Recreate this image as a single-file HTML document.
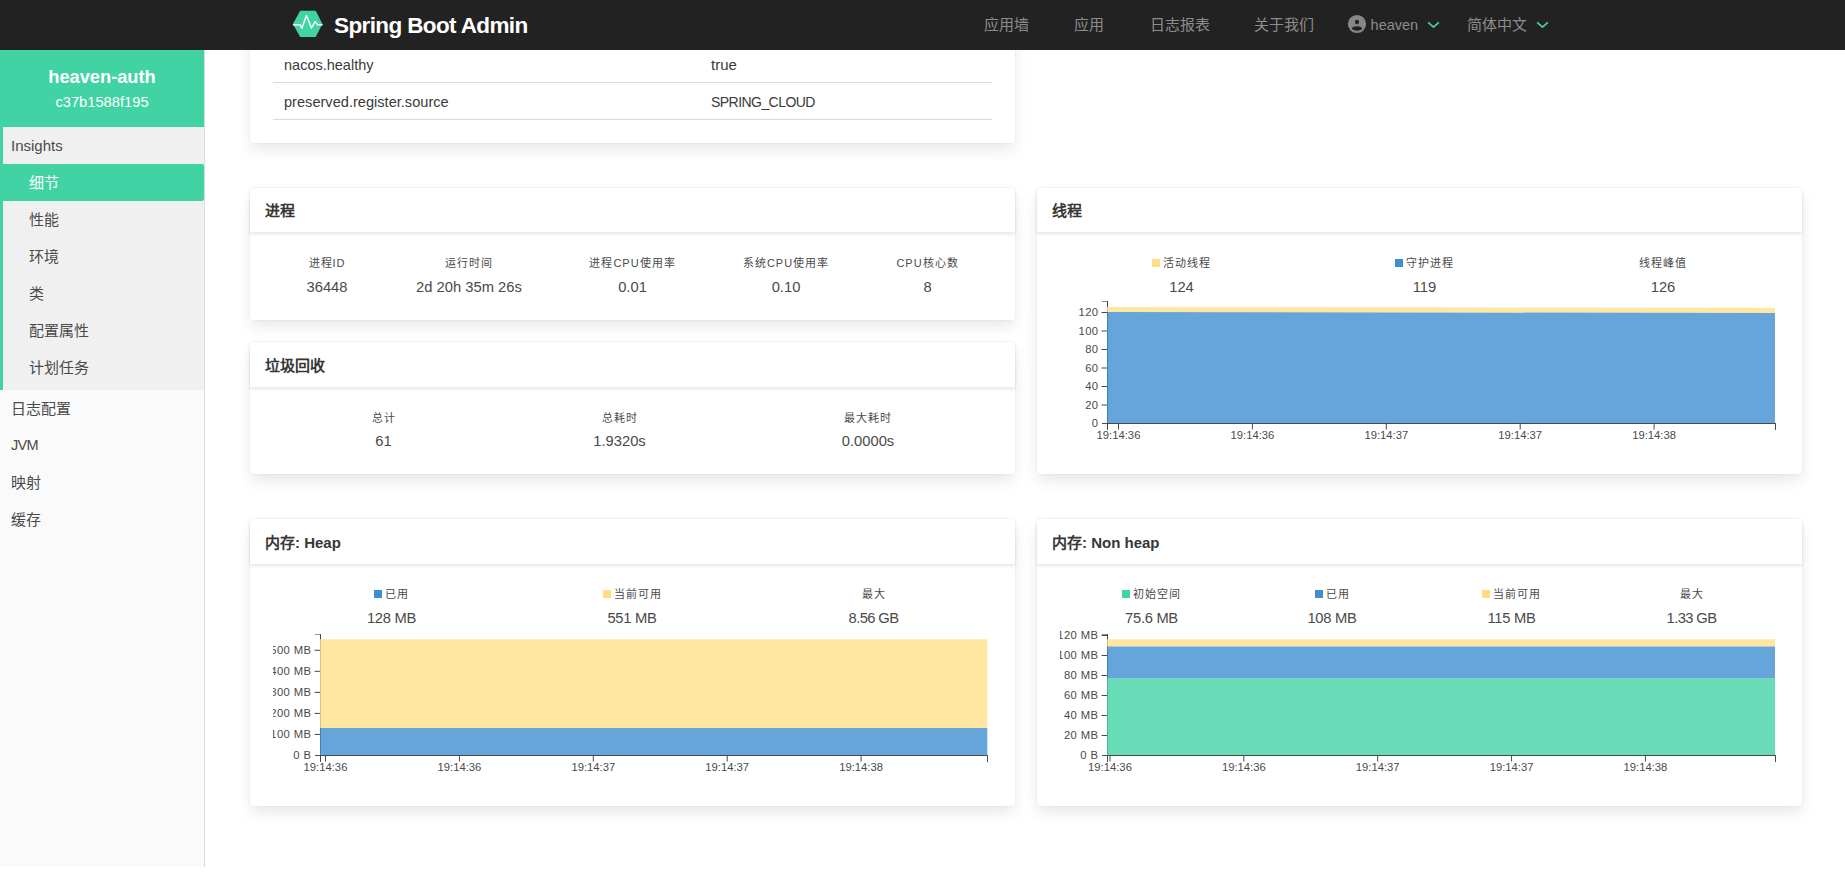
<!DOCTYPE html>
<html lang="zh-CN">
<head>
<meta charset="utf-8">
<title>Spring Boot Admin</title>
<style>
*{box-sizing:border-box}
html,body{margin:0;padding:0}
body{width:1845px;height:884px;overflow:hidden;background:#fff;position:relative;
  font-family:"Liberation Sans",sans-serif;font-size:14.5px;color:#4a4a4a;line-height:1.5}
.abs{position:absolute}
/* ---------- navbar ---------- */
#nav{position:absolute;left:0;top:0;width:1845px;height:50px;background:#222;z-index:10}
#nav .brand{position:absolute;left:334px;top:0;height:50px;line-height:50px;color:#fff;
  font-weight:bold;font-size:22.5px;letter-spacing:-0.62px;white-space:nowrap;padding-top:1px}
#nav .item{position:absolute;top:0;height:50px;line-height:49px;color:#8c8c8c;font-size:15px;white-space:nowrap}
/* ---------- sidebar ---------- */
#side{position:absolute;left:0;top:50px;width:205px;height:817px;background:#fafafa;border-right:1px solid #dbdbdb}
#side .head{position:absolute;left:0;top:0;width:204px;height:77px;background:#42d3a5;color:#fff;text-align:center}
#side .head .n{position:absolute;left:0;width:204px;top:12.5px;font-size:18.25px;font-weight:bold;line-height:28px}
#side .head .i{position:absolute;left:0;width:204px;top:41px;font-size:14.7px;line-height:22px}
#side .grp{position:absolute;left:0;top:77px;width:204px;height:263px;background:#f0f0f0;border-left:3px solid #42d3a5;border-radius:0 2px 0 0}
#side .it{position:absolute;left:0;width:204px;height:37px;line-height:37px;font-size:15px;color:#4a4a4a;white-space:nowrap}
#side .it.top{padding-left:11px}
#side .it.sub{padding-left:29px}
#side .it.act{background:#42d3a5;color:#fff;border-radius:0 2px 2px 0}
/* ---------- cards ---------- */
.card{position:absolute;background:#fff;border-radius:4px;
  box-shadow:0 7.5px 15px -1.875px rgba(10,10,10,.1),0 0 0 1px rgba(10,10,10,.02)}
.card .hd{position:absolute;left:0;top:0;width:100%;height:44px;border-radius:4px 4px 0 0;
  box-shadow:0 1.875px 3.75px rgba(10,10,10,.1)}
.card .hd b{position:absolute;left:15px;top:0;line-height:45px;font-size:15px;font-weight:bold;color:#363636;white-space:nowrap}
.lv{position:absolute;text-align:center;white-space:nowrap;width:200px;margin-left:-100px}
.lv .h{display:block;font-size:11px;letter-spacing:1px;line-height:16px;height:16px;color:#4a4a4a}
.lv .v{display:block;font-size:14.75px;line-height:22px;height:22px;margin-top:4.2px;color:#4a4a4a}
.lv .h i{display:inline-block;width:8px;height:8px;margin-right:3px;vertical-align:0.5px}
.by{background:#ffdd82}.bb{background:#3e8ed0}.bg{background:#42d3a5}
svg{position:absolute;overflow:hidden}
svg text{font-family:"Liberation Sans",sans-serif;font-size:11.25px;fill:#4a4a4a}
.tk{fill:none;stroke:#4a4a4a;stroke-width:1}
.ax{fill:none;stroke:#4a4a4a;stroke-width:1;shape-rendering:crispEdges}
</style>
</head>
<body>

<!-- ================= NAVBAR ================= -->
<div id="nav">
  <svg style="left:292px;top:10px" width="32" height="28" viewBox="0 0 32 28">
    <path d="M8.8 1.8 H23.1 L29.3 13.9 L23.1 26 H8.8 L2 13.9Z" fill="#42d3a5" stroke="#42d3a5" stroke-width="2" stroke-linejoin="round"/>
    <path d="M0.9 14.7 H8 L9.85 18.2 L14.5 5.6 L19.4 18 L23.2 11.7 L25.7 14.7 H30.6" fill="none" stroke="#fff" stroke-width="1.4" stroke-linejoin="round"/>
  </svg>
  <div class="brand">Spring Boot Admin</div>
  <div class="item" style="left:984px">应用墙</div>
  <div class="item" style="left:1074px">应用</div>
  <div class="item" style="left:1150px">日志报表</div>
  <div class="item" style="left:1254px">关于我们</div>
  <svg style="left:1347px;top:14px" width="20" height="20" viewBox="0 0 20 20">
    <circle cx="10" cy="10" r="9.1" fill="#878787"/>
    <circle cx="10" cy="8" r="2.15" fill="#222"/>
    <path d="M4.9 15 Q4.9 12.3 10 12.3 Q15.1 12.3 15.1 15 Q13 16.7 10 16.7 Q7 16.7 4.9 15Z" fill="#222"/>
  </svg>
  <div class="item" style="left:1370.6px;font-size:14.5px;padding-top:0.6px">heaven</div>
  <svg style="left:1426px;top:19px" width="15" height="12" viewBox="0 0 15 12"><path d="M2.2 3.3 L7.5 8.1 L12.8 3.3" fill="none" stroke="#42d3a5" stroke-width="1.7"/></svg>
  <div class="item" style="left:1467px">简体中文</div>
  <svg style="left:1535px;top:19px" width="15" height="12" viewBox="0 0 15 12"><path d="M2.2 3.3 L7.5 8.1 L12.8 3.3" fill="none" stroke="#42d3a5" stroke-width="1.7"/></svg>
</div>

<!-- ================= SIDEBAR ================= -->
<div id="side">
  <div class="head"><div class="n">heaven-auth</div><div class="i">c37b1588f195</div></div>
  <div class="grp"></div>
  <div class="it top" style="top:77px;left:0">Insights</div>
  <div class="it sub act" style="top:114px">细节</div>
  <div class="it sub" style="top:151px">性能</div>
  <div class="it sub" style="top:188px">环境</div>
  <div class="it sub" style="top:225px">类</div>
  <div class="it sub" style="top:262px">配置属性</div>
  <div class="it sub" style="top:299px">计划任务</div>
  <div class="it top" style="top:340px">日志配置</div>
  <div class="it top" style="top:377px;font-size:14.5px;letter-spacing:-0.7px">JVM</div>
  <div class="it top" style="top:414px">映射</div>
  <div class="it top" style="top:451px">缓存</div>
</div>

<!-- ================= CONTENT ================= -->
<!-- metadata card (scrolled, only bottom visible) -->
<div class="card" style="left:250px;top:-60px;width:765px;height:203px;color:#3a3a3a">
  <div class="abs" style="left:23px;top:142px;width:719px;height:1px;background:#dbdbdb"></div>
  <div class="abs" style="left:23px;top:179px;width:719px;height:1px;background:#dbdbdb"></div>
  <div class="abs" style="left:34px;top:114px;line-height:22px;font-size:14.5px;white-space:nowrap">nacos.healthy</div>
  <div class="abs" style="left:461px;top:114px;line-height:22px;font-size:15px;white-space:nowrap">true</div>
  <div class="abs" style="left:34px;top:151px;line-height:22px;font-size:14.6px;white-space:nowrap">preserved.register.source</div>
  <div class="abs" style="left:461px;top:151px;line-height:22px;font-size:14px;letter-spacing:-0.55px;white-space:nowrap">SPRING_CLOUD</div>
</div>

<!-- process card -->
<div class="card" style="left:250px;top:188px;width:765px;height:132px">
  <div class="hd"><b>进程</b></div>
  <div class="lv" style="left:77px;top:67.4px"><span class="h">进程ID</span><span class="v">36448</span></div>
  <div class="lv" style="left:219px;top:67.4px"><span class="h">运行时间</span><span class="v">2d 20h 35m 26s</span></div>
  <div class="lv" style="left:382.5px;top:67.4px"><span class="h">进程CPU使用率</span><span class="v">0.01</span></div>
  <div class="lv" style="left:536px;top:67.4px"><span class="h">系统CPU使用率</span><span class="v">0.10</span></div>
  <div class="lv" style="left:677.5px;top:67.4px"><span class="h">CPU核心数</span><span class="v">8</span></div>
</div>

<!-- GC card -->
<div class="card" style="left:250px;top:342px;width:765px;height:132px">
  <div class="hd" style="height:44.6px"><b style="top:0.5px">垃圾回收</b></div>
  <div class="lv" style="left:133.5px;top:68.2px"><span class="h">总计</span><span class="v">61</span></div>
  <div class="lv" style="left:369.5px;top:68.2px"><span class="h">总耗时</span><span class="v">1.9320s</span></div>
  <div class="lv" style="left:618px;top:68.2px"><span class="h">最大耗时</span><span class="v">0.0000s</span></div>
</div>

<!-- threads card -->
<div class="card" style="left:1037px;top:188px;width:765px;height:286px">
  <div class="hd"><b>线程</b></div>
  <div class="lv" style="left:144.5px;top:67.4px"><span class="h"><i class="by"></i>活动线程</span><span class="v">124</span></div>
  <div class="lv" style="left:387.5px;top:67.4px"><span class="h"><i class="bb"></i>守护进程</span><span class="v">119</span></div>
  <div class="lv" style="left:626px;top:67.4px"><span class="h">线程峰值</span><span class="v">126</span></div>
  <svg style="left:0;top:100px" width="765" height="170" viewBox="0 100 765 170">
    <path class="ax" d="M64.5 113.5H70" style="stroke:#8e8e8e"/>
    <path class="ax" d="M70.5 113V235.5H64.5"/>
    <path class="ax" d="M70.5 241.5V235.5H738.5V241.5"/>
    <path class="tk" d="M64.5 124.5H70.5M64.5 143H70.5M64.5 161.5H70.5M64.5 180H70.5M64.5 198.5H70.5M64.5 217H70.5"/>
    <path class="tk" d="M81.5 235.5V241.5M215.4 235.5V241.5M349.3 235.5V241.5M483.2 235.5V241.5M617.1 235.5V241.5"/>
    <path d="M70 119 L716 119.7 L716 120 L738 120 L738 125 L70 124Z" fill="#ffe08a" opacity=".8"/>
    <path d="M70 124 L738 125 L738 235 L70 235Z" fill="#3e8ed0" opacity=".8"/>
    <g text-anchor="end" style="letter-spacing:0.4px"><text x="61.5" y="128.1">120</text><text x="61.5" y="146.6">100</text><text x="61.5" y="165.1">80</text><text x="61.5" y="183.6">60</text><text x="61.5" y="202.1">40</text><text x="61.5" y="220.6">20</text><text x="61.5" y="239.1">0</text></g>
    <g text-anchor="middle"><text x="81.5" y="251">19:14:36</text><text x="215.4" y="251">19:14:36</text><text x="349.3" y="251">19:14:37</text><text x="483.2" y="251">19:14:37</text><text x="617.1" y="251">19:14:38</text></g>
  </svg>
</div>

<!-- heap card -->
<div class="card" style="left:250px;top:519px;width:765px;height:287px">
  <div class="hd" style="height:45px"><b style="top:1px">内存: Heap</b></div>
  <div class="lv" style="left:141.5px;top:67.4px"><span class="h"><i class="bb"></i>已用</span><span class="v" style="letter-spacing:-0.3px">128 MB</span></div>
  <div class="lv" style="left:382px;top:67.4px"><span class="h"><i class="by"></i>当前可用</span><span class="v" style="letter-spacing:-0.3px">551 MB</span></div>
  <div class="lv" style="left:623.5px;top:67.4px"><span class="h">最大</span><span class="v" style="letter-spacing:-0.6px">8.56 GB</span></div>
  <svg style="left:0;top:100px;clip-path:inset(0 0 0 23px)" width="765" height="170" viewBox="0 100 765 170">
    <path class="ax" d="M64.5 115.5H70" style="stroke:#8e8e8e"/>
    <path class="ax" d="M70.5 115V236.5H64.5"/>
    <path class="ax" d="M70.5 242.5V236.5H737.5V242.5"/>
    <path class="tk" d="M64.5 131.25H70.5M64.5 152.3H70.5M64.5 173.35H70.5M64.5 194.4H70.5M64.5 215.45H70.5"/>
    <path class="tk" d="M75.5 236.5V242.5M209.4 236.5V242.5M343.3 236.5V242.5M477.2 236.5V242.5M611.1 236.5V242.5"/>
    <path d="M70 120.3 H737.3 V209.1 H70Z" fill="#ffe08a" opacity=".8"/>
    <path d="M70 209.1 H737.3 V236 H70Z" fill="#3e8ed0" opacity=".8"/>
    <g text-anchor="end" style="letter-spacing:0.42px"><text x="61.5" y="134.85">500 MB</text><text x="61.5" y="155.9">400 MB</text><text x="61.5" y="176.95">300 MB</text><text x="61.5" y="198">200 MB</text><text x="61.5" y="219.05">100 MB</text><text x="61.5" y="240.1">0 B</text></g>
    <g text-anchor="middle"><text x="75.5" y="252">19:14:36</text><text x="209.4" y="252">19:14:36</text><text x="343.3" y="252">19:14:37</text><text x="477.2" y="252">19:14:37</text><text x="611.1" y="252">19:14:38</text></g>
  </svg>
</div>

<!-- non-heap card -->
<div class="card" style="left:1037px;top:519px;width:765px;height:287px">
  <div class="hd" style="height:45px"><b style="top:1px">内存: Non heap</b></div>
  <div class="lv" style="left:114.5px;top:67.4px"><span class="h"><i class="bg"></i>初始空间</span><span class="v" style="letter-spacing:-0.3px">75.6 MB</span></div>
  <div class="lv" style="left:295px;top:67.4px"><span class="h"><i class="bb"></i>已用</span><span class="v" style="letter-spacing:-0.3px">108 MB</span></div>
  <div class="lv" style="left:474.5px;top:67.4px"><span class="h"><i class="by"></i>当前可用</span><span class="v" style="letter-spacing:-0.3px">115 MB</span></div>
  <div class="lv" style="left:654.5px;top:67.4px"><span class="h">最大</span><span class="v" style="letter-spacing:-0.6px">1.33 GB</span></div>
  <svg style="left:0;top:100px;clip-path:inset(0 0 0 23px)" width="765" height="170" viewBox="0 100 765 170">
    <path class="ax" d="M64.5 115.5H70" style="stroke:#8e8e8e"/>
    <path class="ax" d="M70.5 115V236.5H64.5"/>
    <path class="ax" d="M70.5 242.5V236.5H738.5V242.5"/>
    <path class="tk" d="M64.5 116.5H70.5M64.5 136.5H70.5M64.5 156.5H70.5M64.5 176.5H70.5M64.5 196.5H70.5M64.5 216.5H70.5"/>
    <path class="tk" d="M73 236.5V242.5M206.85 236.5V242.5M340.7 236.5V242.5M474.55 236.5V242.5M608.4 236.5V242.5"/>
    <path d="M70 120.3 H738 V127.4 H70Z" fill="#ffe08a" opacity=".8"/>
    <path d="M70 127.4 H738 V159.6 H70Z" fill="#3e8ed0" opacity=".8"/>
    <path d="M70 159.6 H738 V236 H70Z" fill="#42d3a5" opacity=".8"/>
    <g text-anchor="end" style="letter-spacing:0.42px"><text x="61.5" y="120.1">120 MB</text><text x="61.5" y="140.1">100 MB</text><text x="61.5" y="160.1">80 MB</text><text x="61.5" y="180.1">60 MB</text><text x="61.5" y="200.1">40 MB</text><text x="61.5" y="220.1">20 MB</text><text x="61.5" y="240.1">0 B</text></g>
    <g text-anchor="middle"><text x="73" y="252">19:14:36</text><text x="206.85" y="252">19:14:36</text><text x="340.7" y="252">19:14:37</text><text x="474.55" y="252">19:14:37</text><text x="608.4" y="252">19:14:38</text></g>
  </svg>
</div>

</body>
</html>
